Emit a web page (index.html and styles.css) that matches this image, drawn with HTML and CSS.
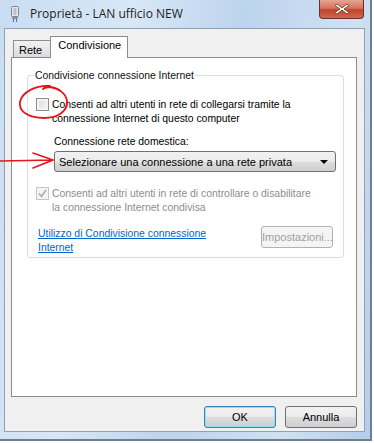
FILE: index.html
```html
<!DOCTYPE html>
<html lang="it">
<head>
    <meta charset="UTF-8">
    <title>Proprietà - LAN ufficio NEW</title>
    <link rel="stylesheet" href="styles.css">
</head>
<body>
    <div class="window">
        <!-- Title bar -->
        <div class="titlebar">
            <svg class="app-icon" width="10" height="16" viewBox="0 0 10 16">
                <rect x="1.5" y="0.5" width="7" height="10" rx="1" fill="#e4e8ec" stroke="#7d8590"/>
                <rect x="3.5" y="2" width="3" height="7" fill="#b9c2cc"/>
                <rect x="2" y="11" width="6" height="2" fill="#8d96a0"/>
                <rect x="3" y="13" width="1" height="3" fill="#2f7fd8"/>
                <rect x="6" y="13" width="1" height="3" fill="#2f7fd8"/>
            </svg>
            <span class="title">Proprietà - LAN ufficio NEW</span>
            <div class="close-btn">
                <svg width="16" height="12" viewBox="0 0 16 12">
                    <path d="M3 1 L8 5 L13 1 L15 2.5 L10 6 L15 9.5 L13 11 L8 7 L3 11 L1 9.5 L6 6 L1 2.5 Z" fill="#ffffff" stroke="#6b3328" stroke-width="0.8"/>
                </svg>
            </div>
        </div>

        <!-- Client area -->
        <div class="client">
            <div class="tabs">
                <div class="tab">Rete</div>
                <div class="tab active">Condivisione</div>
            </div>
            <div class="panel">
                <fieldset class="group">
                    <legend>Condivisione connessione Internet</legend>

                    <div class="check-row">
                        <span class="checkbox"></span>
                        <span class="check-label">Consenti ad altri utenti in rete di collegarsi tramite la<br>connessione Internet di questo computer</span>
                    </div>

                    <div class="field">
                        <div class="field-label">Connessione rete domestica:</div>
                        <div class="select">
                            <span>Selezionare una connessione a una rete privata</span>
                            <span class="caret"></span>
                        </div>
                    </div>

                    <div class="check-row disabled">
                        <span class="checkbox checked">
                            <svg width="9" height="9" viewBox="0 0 9 9">
                                <path d="M1 4.5 L3.5 7.5 L8 1" fill="none" stroke="#a9acb0" stroke-width="1.6"/>
                            </svg>
                        </span>
                        <span class="check-label">Consenti ad altri utenti in rete di controllare o disabilitare<br>la connessione Internet condivisa</span>
                    </div>

                    <div class="link-row">
                        <a href="#" class="link">Utilizzo di Condivisione connessione<br>Internet</a>
                        <button class="btn" disabled>Impostazioni...</button>
                    </div>
                </fieldset>
            </div>

            <div class="footer">
                <button class="btn default">OK</button>
                <button class="btn">Annulla</button>
            </div>
        </div>

        <!-- Red marks drawn over the screenshot -->
        <svg class="marks" width="374" height="443" viewBox="0 0 374 443">
            <path d="M50 86 C36 85 22 92 20 102 C18 112 30 118 44 118 C58 118 68 111 67 101 C66 93 58 88 50 87 C46 87 44 88 43 89" fill="none" stroke="#e8141b" stroke-width="1.8" stroke-linecap="round"/>
            <path d="M0 161 L53 160 M33 153 L53 160 L33 168" fill="none" stroke="#e8141b" stroke-width="1.6" stroke-linecap="round"/>
        </svg>
    </div>
</body>
</html>
```

FILE: styles.css
```css
/* Page and window frame */
body {
    margin: 0;
    font-family: "Liberation Sans", Arial, sans-serif;
    font-size: 10.4px;
    color: #000000;
    background: #ffffff;
}

.window {
    position: relative;
    width: 372px;
    height: 441px;
    padding: 0 5px 7px 4px;
    box-sizing: border-box;
    border-right: 2px solid #6f7f91;
    border-bottom: 2px solid #6f7f91;
    background: linear-gradient(100deg, #c9ddf2 0%, #d8e7f6 30%, #bcd4ee 55%, #cfe0f3 80%, #b4cdea 100%);
    display: flex;
    flex-direction: column;
    overflow: hidden;
}

/* Title bar */
.titlebar {
    height: 28px;
    display: flex;
    align-items: center;
    flex-shrink: 0;
}

.app-icon {
    margin-left: 6px;
}

.title {
    margin-left: 10px;
    font-family: "Open Sans", "Liberation Sans", sans-serif;
    font-size: 12px;
    color: #1e1e1e;
    margin-top: -2px;
}

.close-btn {
    margin-left: auto;
    align-self: flex-start;
    width: 45px;
    height: 19px;
    box-sizing: border-box;
    border: 1px solid #6b3328;
    border-top: none;
    border-radius: 0 0 4px 4px;
    background: linear-gradient(to bottom, #e8a493 0%, #d4745f 45%, #c0432a 55%, #cf6a4f 100%);
    display: flex;
    align-items: center;
    justify-content: center;
    margin-right: 1px;
}

/* Client area */
.client {
    flex: 1;
    background: #f0f0f0;
    border: 1px solid #8da2b9;
    padding: 7px 7px 0 6px;
    display: flex;
    flex-direction: column;
}

.tabs {
    display: flex;
    align-items: flex-end;
    height: 21px;
    padding-left: 2px;
    position: relative;
    z-index: 1;
}

.tab {
    height: 17px;
    padding: 0 8px 0 5px;
    box-sizing: border-box;
    border: 1px solid #898c95;
    border-bottom: none;
    background: linear-gradient(to bottom, #f2f2f2, #dcdcdc);
    line-height: 18px;
    font-size: 11px;
}

.tab.active {
    height: 22px;
    margin-bottom: -1px;
    margin-left: -1px;
    padding: 0 6px 0 7px;
    background: #ffffff;
    line-height: 17px;
}

.panel {
    height: 340px;
    box-sizing: border-box;
    border: 1px solid #898c95;
    background: #ffffff;
    padding: 12px 12px 0 15px;
}

/* Group box */
.group {
    margin: 0;
    height: 188px;
    box-sizing: border-box;
    border: 1px solid #d5dfe5;
    border-radius: 3px;
    padding: 17px 7px 0 8px;
}

.group legend {
    padding: 0 1px;
    margin-left: -2px;
    color: #101010;
}

.check-row {
    display: flex;
    align-items: flex-start;
    line-height: 14px;
}

.checkbox {
    width: 13px;
    height: 13px;
    box-sizing: border-box;
    border: 1px solid #8f8f8f;
    background: linear-gradient(135deg, #dcdcdc, #f6f6f6);
    box-shadow: inset 0 0 0 2px #f4f4f4;
    margin-top: 0;
    margin-right: 3px;
    flex-shrink: 0;
    display: flex;
    align-items: center;
    justify-content: center;
}

.checkbox.checked {
    border-color: #c4c6c8;
    background: #f4f4f4;
    box-shadow: none;
}

.disabled .check-label {
    color: #8d8d8d;
}

.field {
    margin: 9px 0 0 18px;
}

.field-label {
    line-height: 14px;
}

.select {
    margin-top: 2px;
    height: 21px;
    box-sizing: border-box;
    border: 1px solid #707070;
    border-radius: 3px;
    background: linear-gradient(to bottom, #f2f2f2 0%, #ebebeb 50%, #dddddd 51%, #cfcfcf 100%);
    display: flex;
    align-items: center;
    padding: 0 7px 0 4px;
    font-size: 11px;
}

.caret {
    margin-left: auto;
    width: 0;
    height: 0;
    border-left: 4px solid transparent;
    border-right: 4px solid transparent;
    border-top: 4px solid #000000;
}

.disabled {
    margin-top: 15px;
}

.link-row {
    display: flex;
    align-items: flex-start;
    justify-content: space-between;
    margin-top: 11px;
    padding-left: 2px;
}

.link {
    color: #0066cc;
    line-height: 14px;
    margin-top: 1px;
}

/* Buttons */
.btn {
    width: 72px;
    height: 22px;
    font-family: "Liberation Sans", Arial, sans-serif;
    font-size: 11px;
    color: #000000;
    border: 1px solid #707070;
    border-radius: 3px;
    background: linear-gradient(to bottom, #f2f2f2 0%, #ebebeb 50%, #dddddd 51%, #cfcfcf 100%);
    padding: 0;
}

.btn:disabled {
    color: #a0a0a0;
    border-color: #adb2b5;
    background: #f4f4f4;
    margin-right: 3px;
}

.btn.default {
    border-color: #3c7fb1;
    box-shadow: inset 0 0 0 1px #8ee0f8;
}

.footer {
    display: flex;
    justify-content: flex-end;
    gap: 9px;
    padding-top: 9px;
}

/* Red marks over the content */
.marks {
    position: absolute;
    left: 0;
    top: 0;
    pointer-events: none;
}
```
